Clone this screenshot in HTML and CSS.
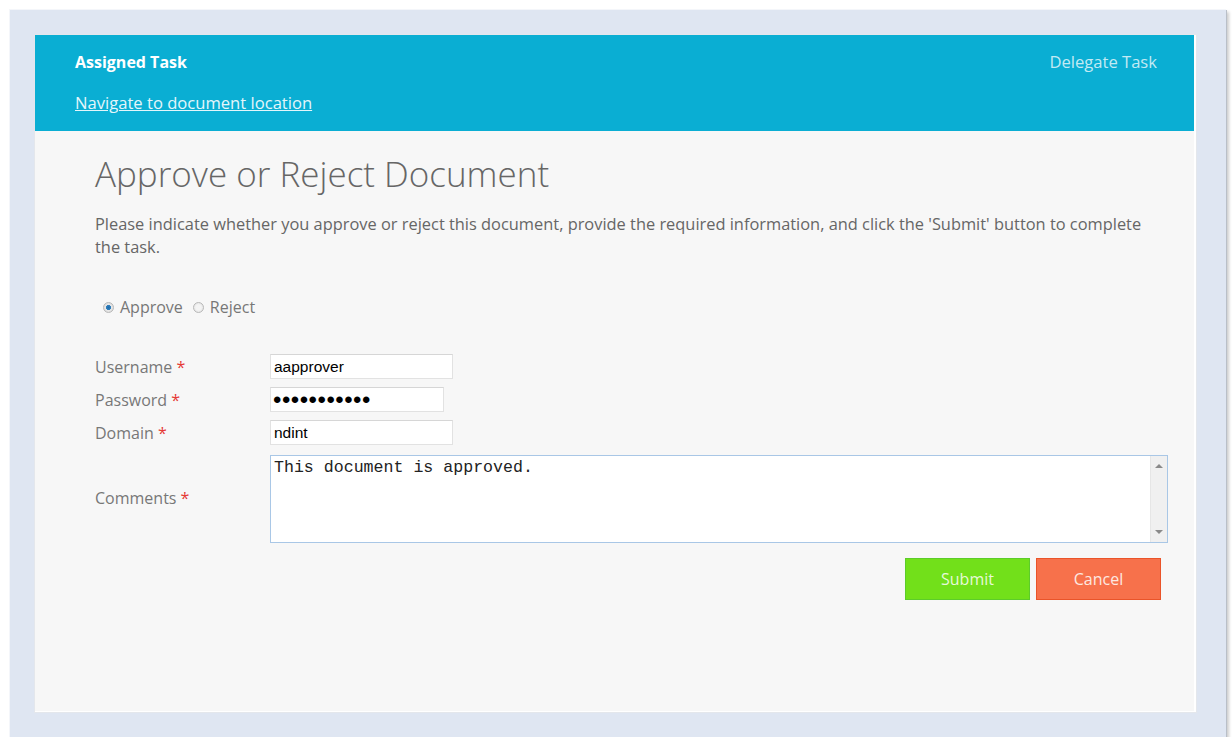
FILE: index.html
```html
<!DOCTYPE html>
<html lang="en">

<head>
    <meta charset="UTF-8">
    <title>Assigned Task</title>
    <link rel="stylesheet" href="styles.css">
</head>

<body>
    <div class="frame">
        <div class="panel">
            <!-- Task header -->
            <div class="task-header">
                <div class="header-left">
                    <div class="task-title">Assigned Task</div>
                    <a href="#" class="nav-link">Navigate to document location</a>
                </div>
                <a href="#" class="delegate">Delegate Task</a>
            </div>

            <!-- Task form -->
            <div class="content">
                <h1>Approve or Reject Document</h1>
                <p class="intro">Please indicate whether you approve or reject this document, provide the required information, and click the 'Submit' button to complete the task.</p>

                <div class="choice">
                    <label><input type="radio" name="outcome" checked> Approve</label>
                    <label><input type="radio" name="outcome"> Reject</label>
                </div>

                <div class="form-grid">
                    <label class="field-label">Username <span class="req">*</span></label>
                    <input type="text" class="field user" value="aapprover">

                    <label class="field-label">Password <span class="req">*</span></label>
                    <input type="password" class="field pass" value="password123">

                    <label class="field-label">Domain <span class="req">*</span></label>
                    <input type="text" class="field domain" value="ndint">

                    <label class="field-label">Comments <span class="req">*</span></label>
                    <div class="comments-box">
                        <textarea class="comments">This document is approved.</textarea>
                        <div class="scrollbar">
                            <span class="arrow up"></span>
                            <span class="arrow down"></span>
                        </div>
                    </div>
                </div>

                <div class="actions">
                    <button class="btn submit">Submit</button>
                    <button class="btn cancel">Cancel</button>
                </div>
            </div>
        </div>
    </div>
</body>

</html>
```

FILE: styles.css
```css
body {
    margin: 0;
    padding: 9px 0 0 9px;
    background-color: #fff;
    font-family: "Open Sans", "Noto Sans", sans-serif;
}

.frame {
    width: 1161px;
    height: 676px;
    padding: 25px 30px 26px 25px;
    background: #dfe6f2;
    border-top: 1px solid #f4f6fa;
    border-left: 1px solid #f4f6fa;
    box-shadow: 1px 1px 0 #b9bfc8, 3px 3px 3px rgba(0, 0, 0, 0.2);
}

.panel {
    height: 100%;
    background: #f7f7f7;
    border-right: 2px solid #fff;
    border-bottom: 1px solid #fff;
    box-shadow: 0 0 0 1px #e4e7ec;
    display: flex;
    flex-direction: column;
}

.task-header {
    height: 96px;
    background: #0aaed3;
    padding: 0 37px 0 40px;
    display: flex;
    justify-content: space-between;
}

.task-title {
    color: #fff;
    font-weight: bold;
    font-size: 16px;
    margin-top: 16px;
}

.nav-link {
    display: inline-block;
    margin-top: 18px;
    color: #e4f6fb;
    font-size: 16.6px;
}

.delegate {
    margin-top: 15px;
    color: #c2eaf4;
    font-size: 16.6px;
    text-decoration: none;
}

.content {
    padding: 0 26px 0 60px;
}

h1 {
    margin: 19px 0 0;
    font-weight: 300;
    font-size: 35px;
    color: #666;
}

.intro {
    margin: 15px 0 0;
    font-size: 16.4px;
    line-height: 23px;
    color: #666;
    padding-right: 12px;
}

.choice {
    margin: 38px 0 0 8px;
    display: flex;
    gap: 10px;
    font-size: 16px;
    color: #777;
}

.choice label {
    display: flex;
    align-items: center;
}

.choice input {
    appearance: none;
    margin: 0 6px 0 0;
    width: 11px;
    height: 11px;
    border-radius: 50%;
    border: 1px solid #b8b8b8;
    background: radial-gradient(circle, #f4f4f4 40%, #dcdcdc 100%);
}

.choice input:checked {
    background: radial-gradient(circle, #1d6aa8 0, #2f7fbd 35%, #e8e8e8 45%, #d4d4d4 100%);
}

.form-grid {
    margin-top: 36px;
    display: grid;
    grid-template-columns: 175px 1fr;
    row-gap: 8px;
    align-items: center;
}

.field-label {
    font-size: 16px;
    color: #777;
}

.req {
    color: #e53935;
}

.field {
    height: 25px;
    box-sizing: border-box;
    border: 1px solid #e2e2e2;
    border-top-color: #d6d6d6;
    background: #fff;
    font-family: "Liberation Sans", Arial, sans-serif;
    font-size: 15.5px;
    padding: 0 3px;
    color: #000;
}

.user,
.domain {
    width: 183px;
}

.pass {
    width: 174px;
    font-size: 24px;
    letter-spacing: 0.5px;
    padding: 0 2px;
}

.comments-box {
    height: 88px;
    margin-top: 2px;
    box-sizing: border-box;
    border: 1px solid #a9c7e6;
    background: #fff;
    display: flex;
}

.comments {
    flex: 1;
    border: none;
    outline: none;
    font-family: "Liberation Mono", "Courier New", monospace;
    font-size: 16.6px;
    padding: 2px 3px;
    resize: none;
    color: #222;
}

.scrollbar {
    width: 16px;
    background: #f0f0f0;
    border-left: 1px solid #e6e6e6;
    display: flex;
    flex-direction: column;
    justify-content: space-between;
    align-items: center;
    padding: 8px 0;
}

.arrow {
    width: 0;
    height: 0;
    border-left: 4px solid transparent;
    border-right: 4px solid transparent;
}

.arrow.up {
    border-bottom: 4px solid #8a8a8a;
}

.arrow.down {
    border-top: 4px solid #8a8a8a;
}

.actions {
    margin-top: 15px;
    padding-right: 7px;
    display: flex;
    justify-content: flex-end;
    gap: 6px;
}

.btn {
    width: 125px;
    height: 42px;
    font-family: "Open Sans", "Noto Sans", sans-serif;
    font-size: 16px;
    color: #e6f9d8;
    cursor: pointer;
}

.submit {
    background: #72e01a;
    border: 1px solid #5ccc2a;
}

.cancel {
    background: #f7714b;
    border: 1px solid #ea5429;
    color: #fde8e0;
}
```
